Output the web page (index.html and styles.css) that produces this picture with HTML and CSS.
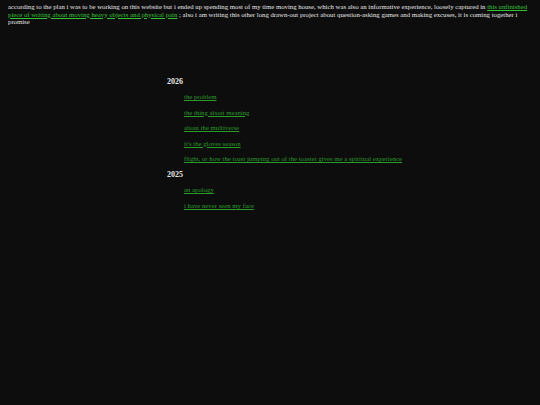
FILE: index.html
```
<!DOCTYPE html>
<html>
<head>
<meta charset="utf-8">
<link rel="stylesheet" href="styles.css">
</head>
<body>
<p class="intro">according to the plan i was to be working on this website but i ended up spending most of my time moving house, which was also an informative experience, loosely captured in <a class="hot" href="#">this unfinished piece of writing about moving heavy objects and physical pain</a> ; also i am writing this other long drawn-out project about question-asking games and making excuses, it is coming together i promise</p>
<main class="archive">
  <section class="year">
    <h2 class="year-title">2026</h2>
    <ul class="posts">
      <li><a href="#">the problem</a></li>
      <li><a href="#">the thing about meaning</a></li>
      <li><a href="#">about the multiverse</a></li>
      <li><a href="#">it's the gloves season</a></li>
      <li><a href="#">flight, or how the toast jumping out of the toaster gives me a spiritual experience</a></li>
    </ul>
  </section>
  <section class="year">
    <h2 class="year-title">2025</h2>
    <ul class="posts">
      <li><a href="#">an apology</a></li>
      <li><a href="#">i have never seen my face</a></li>
    </ul>
  </section>
</main>
</body>
</html>
```
FILE: styles.css
```
html, body {
  background: #0d0d0d;
}
body {
  margin: 0;
  padding: 3px 8px;
  color: #e6e6e6;
  font-family: "Liberation Serif", "Times New Roman", serif;
  font-size: 6.75px;
  line-height: 7.5px;
}
a {
  color: #2a9a2a;
}
a.hot {
  color: #36c236;
}
.intro {
  margin: 0;
}
.archive {
  margin: 52px 0 0 159px;
  display: flex;
  flex-direction: column;
  gap: 8px;
}
.year-title {
  margin: 0;
  font-size: 8px;
  line-height: 8px;
  font-weight: bold;
}
.posts {
  list-style: none;
  margin: 7.5px 0 0 0;
  padding: 0 0 0 17px;
  display: flex;
  flex-direction: column;
  gap: 8.1px;
}
.posts li {
  line-height: 7.5px;
}
```
